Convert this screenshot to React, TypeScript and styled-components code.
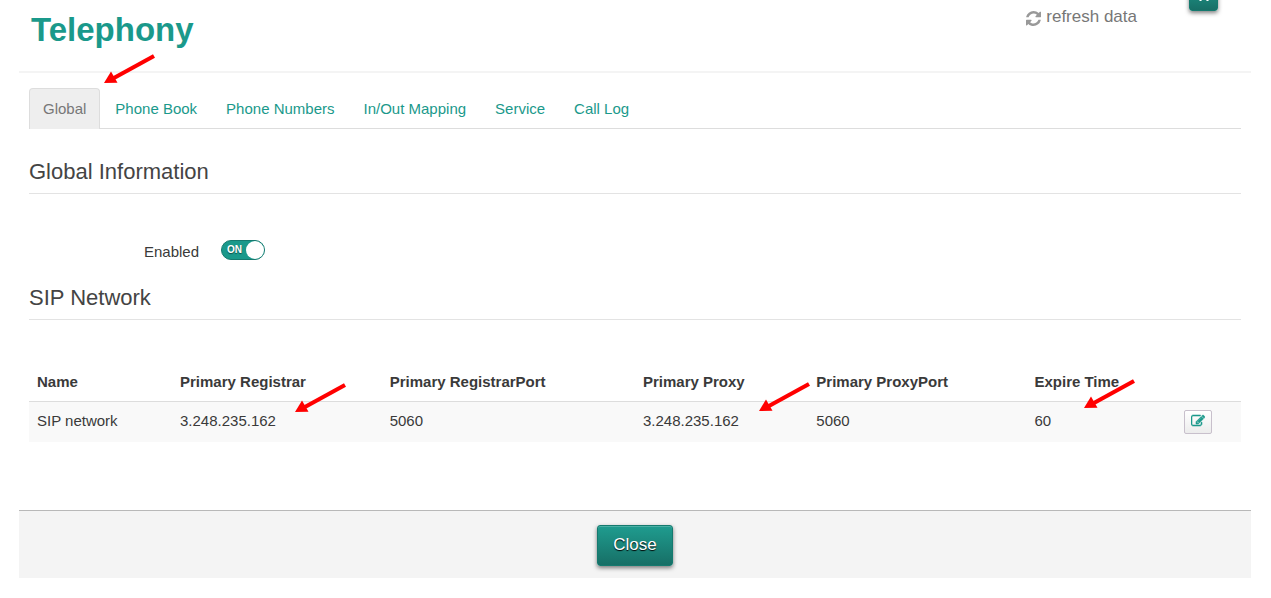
import React, { useState } from "react";
import styled, { createGlobalStyle } from "styled-components";

const TEAL = "#1a998b";

const GlobalStyle = createGlobalStyle`
  * { box-sizing: border-box; }
  body {
    margin: 0;
    background: #fff;
    color: #3a3a3a;
    font: 15px/20px "Liberation Sans", Arial, sans-serif;
  }
`;

const Dialog = styled.main`
  margin: 0 20px 20px 19px;
`;

const Header = styled.header`
  display: flex;
  align-items: flex-start;
  gap: 52px;
  height: 73px;
  padding: 0 33px 0 12px;
  border-bottom: 2px solid #f4f4f4;
  overflow: hidden;
`;

const Title = styled.h1`
  flex: 1;
  margin: 10px 0 0;
  color: ${TEAL};
  font-size: 33px;
  line-height: 40px;
`;

const RefreshButton = styled.button`
  display: flex;
  align-items: center;
  gap: 5px;
  margin: 6px 0 0;
  padding: 0;
  border: 0;
  background: none;
  color: #777;
  font: inherit;
  font-size: 17px;
  line-height: 22px;
  cursor: pointer;

  svg {
    margin-top: 3px;
    fill: #999;
  }
`;

const PrimaryButton = styled.button<{ $compact?: boolean }>`
  display: flex;
  align-items: center;
  justify-content: center;
  flex: none;
  width: ${(p) => (p.$compact ? "29px" : "76px")};
  height: ${(p) => (p.$compact ? "30px" : "41px")};
  margin-top: ${(p) => (p.$compact ? "-19px" : "0")};
  padding: 0 0 2px;
  border: 1px solid #157a6f;
  border-radius: 3px;
  background: linear-gradient(#1f9c8f, #176f66);
  box-shadow: inset 0 1px 0 rgba(255, 255, 255, 0.2), 0 2px 4px rgba(0, 0, 0, 0.5);
  color: #fff;
  font: inherit;
  font-size: 17px;
  text-shadow: 0 1px 1px #000;
  cursor: pointer;

  svg {
    margin-top: 2px;
  }
`;

const Content = styled.div`
  padding: 15px 10px 68px;
`;

const TabList = styled.nav`
  display: flex;
  gap: 1px;
  border-bottom: 1px solid #ddd;
`;

const Tab = styled.a<{ $active?: boolean }>`
  position: relative;
  margin-bottom: -1px;
  padding: 10px 13px;
  border: 1px solid ${(p) => (p.$active ? "#ddd" : "transparent")};
  border-bottom: 0;
  border-radius: 4px 4px 0 0;
  background: ${(p) => (p.$active ? "#eee" : "none")};
  color: ${(p) => (p.$active ? "#777" : TEAL)};
  text-decoration: none;
`;

const SectionTitle = styled.h2`
  margin: 0;
  padding-bottom: 6px;
  border-bottom: 1px solid #e3e3e3;
  color: #444;
  font-size: 22px;
  font-weight: 400;
  line-height: 30px;
`;

const Section = styled.section`
  padding-top: 28px;
`;

const Field = styled.label`
  display: flex;
  gap: 22px;
  padding: 46px 0 0 115px;
  height: 61px;
`;

const FieldName = styled.span`
  padding-top: 2px;
`;

const Switch = styled.span<{ $on: boolean }>`
  position: relative;
  display: flex;
  align-items: center;
  justify-content: ${(p) => (p.$on ? "flex-start" : "flex-end")};
  width: 44px;
  height: 20px;
  padding: 0 5px;
  border: 1px solid ${(p) => (p.$on ? "#157a6f" : "#888")};
  border-radius: 10px;
  background: ${(p) => (p.$on ? TEAL : "#999")};
  color: #fff;
  font-size: 10px;
  font-weight: 700;
  line-height: 18px;
  text-shadow: 0 1px 1px rgba(0, 0, 0, 0.5);

  input {
    appearance: none;
    position: absolute;
    top: 0;
    ${(p) => (p.$on ? "right" : "left")}: 0;
    width: 18px;
    height: 18px;
    margin: 0;
    border-radius: 50%;
    background: #fff;
    cursor: pointer;
  }
`;

const Table = styled.table`
  width: 100%;
  margin-top: 42px;
  border-collapse: collapse;
  table-layout: fixed;
`;

const HeadCell = styled.th<{ $width: string }>`
  position: relative;
  width: ${(p) => p.$width};
  height: 39px;
  padding: 2px 8px 0;
  text-align: left;
  white-space: nowrap;
`;

const Cell = styled.td`
  position: relative;
  height: 41px;
  padding: 0 8px 2px;
  border-top: 1px solid #ddd;
  background: #f9f9f9;
  white-space: nowrap;
`;

const EditButton = styled.button`
  display: flex;
  align-items: center;
  justify-content: center;
  width: 28px;
  height: 24px;
  margin-top: 2px;
  padding: 0 0 1px;
  border: 1px solid #c8c0cc;
  border-radius: 2px;
  background: linear-gradient(#fff, #ececec);
  cursor: pointer;

  svg {
    flex: none;
    fill: ${TEAL};
    stroke: ${TEAL};
  }
`;

const Footer = styled.footer`
  display: flex;
  justify-content: center;
  padding: 14px 0 12px;
  border-top: 1px solid #b8b8b8;
  background: #f4f4f4;
`;

const Pointer = styled.svg<{ $left: number; $top: number }>`
  position: absolute;
  z-index: 1;
  left: ${(p) => p.$left}px;
  top: ${(p) => p.$top}px;
  pointer-events: none;
`;

const Arrow = ({ left, top }: { left: number; top: number }) => (
  <Pointer $left={left} $top={top} width="52" height="30" viewBox="0 0 52 30" aria-hidden="true">
    <path d="M50 2 9 24.500" stroke="#f00" strokeWidth="4.200" fill="none" />
    <path d="M0 29 7 17.500 13.500 28.800Z" fill="#f00" />
  </Pointer>
);

const RefreshIcon = () => (
  <svg width="15" height="15" viewBox="0 0 1536 1536" aria-hidden="true">
    <path d="M1511 928q0 5-1 7-64 268-268 434.500t-478 166.500q-146 0-282.500-55t-243.500-157l-129 129q-19 19-45 19t-45-19-19-45v-448q0-26 19-45t45-19h448q26 0 45 19t19 45-19 45l-137 137q71 66 161 102t187 36q134 0 250-65t186-179q11-17 53-117 8-23 30-23h192q13 0 22.500 9.500t9.500 22.500zm25-800v448q0 26-19 45t-45 19h-448q-26 0-45-19t-19-45 19-45l138-138q-148-137-349-137-134 0-250 65t-186 179q-11 17-53 117-8 23-30 23h-199q-13 0-22.500-9.500t-9.500-22.500v-7q65-268 270-434.500t480-166.500q146 0 284 55.500t245 156.500l130-129q19-19 45-19t45 19 19 45z" />
  </svg>
);

const EditIcon = () => (
  <svg width="14" height="14" viewBox="0 0 1792 1792" aria-hidden="true">
    <path
      strokeWidth="70"
      d="M888 1184l116-116-152-152-116 116v56h96v96h56zm440-720q-16-16-33 1l-350 350q-17 17-1 33t33-1l350-350q17-17 1-33zm80 594v190q0 119-84.500 203.500t-203.500 84.500h-832q-119 0-203.500-84.500t-84.500-203.500v-832q0-119 84.500-203.500t203.500-84.500h832q63 0 117 25 15 7 18 23 3 17-9 29l-49 49q-14 14-32 8-23-6-45-6h-832q-66 0-113 47t-47 113v832q0 66 47 113t113 47h832q66 0 113-47t47-113v-126q0-13 9-22l64-64q15-15 35-7t20 29zm-96-738l288 288-672 672h-288v-288zm444 132l-92 92-288-288 92-92q28-28 68-28t68 28l152 152q28 28 28 68t-28 68z"
    />
  </svg>
);

const CrossIcon = () => (
  <svg width="12" height="12" viewBox="0 0 12 12" aria-hidden="true">
    <path d="M2.500 2.500 9.500 9.500M9.500 2.500 2.500 9.500" stroke="#fff" strokeWidth="3" strokeLinecap="round" />
  </svg>
);

const tabs = ["Global", "Phone Book", "Phone Numbers", "In/Out Mapping", "Service", "Call Log"];

const columns = [
  { name: "Name", width: "11.8%", value: "SIP network" },
  { name: "Primary Registrar", width: "17.3%", value: "3.248.235.162", arrow: { left: 123, top: -19 } },
  { name: "Primary RegistrarPort", width: "20.9%", value: "5060" },
  { name: "Primary Proxy", width: "14.3%", value: "3.248.235.162", arrow: { left: 124, top: -20 } },
  { name: "Primary ProxyPort", width: "18%", value: "5060" },
  { name: "Expire Time", width: "12.3%", value: "60", arrow: { left: 58, top: -23 } },
];

export default function App() {
  const [enabled, setEnabled] = useState(true);

  return (
    <>
      <GlobalStyle />
      <Dialog>
        <Header>
          <Title>Telephony</Title>
          <RefreshButton type="button">
            <RefreshIcon />
            refresh data
          </RefreshButton>
          <PrimaryButton type="button" $compact aria-label="Close window">
            <CrossIcon />
          </PrimaryButton>
        </Header>
        <Content>
          <TabList>
            {tabs.map((tab, i) => (
              <Tab key={tab} href="#" $active={i === 0}>
                {tab}
                {i === 0 && <Arrow left={74} top={-35} />}
              </Tab>
            ))}
          </TabList>
          <Section>
            <SectionTitle>Global Information</SectionTitle>
            <Field>
              <FieldName>Enabled</FieldName>
              <Switch $on={enabled}>
                {enabled ? "ON" : "OFF"}
                <input
                  type="checkbox"
                  role="switch"
                  checked={enabled}
                  onChange={(e) => setEnabled(e.target.checked)}
                />
              </Switch>
            </Field>
          </Section>
          <Section>
            <SectionTitle>SIP Network</SectionTitle>
            <Table>
              <thead>
                <tr>
                  {columns.map((c) => (
                    <HeadCell key={c.name} $width={c.width}>
                      {c.name}
                    </HeadCell>
                  ))}
                  <HeadCell as="td" $width="5.4%" />
                </tr>
              </thead>
              <tbody>
                <tr>
                  {columns.map((c) => (
                    <Cell key={c.name}>
                      {c.value}
                      {c.arrow && <Arrow left={c.arrow.left} top={c.arrow.top} />}
                    </Cell>
                  ))}
                  <Cell>
                    <EditButton type="button" aria-label="Edit SIP network">
                      <EditIcon />
                    </EditButton>
                  </Cell>
                </tr>
              </tbody>
            </Table>
          </Section>
        </Content>
        <Footer>
          <PrimaryButton type="button">Close</PrimaryButton>
        </Footer>
      </Dialog>
    </>
  );
}
